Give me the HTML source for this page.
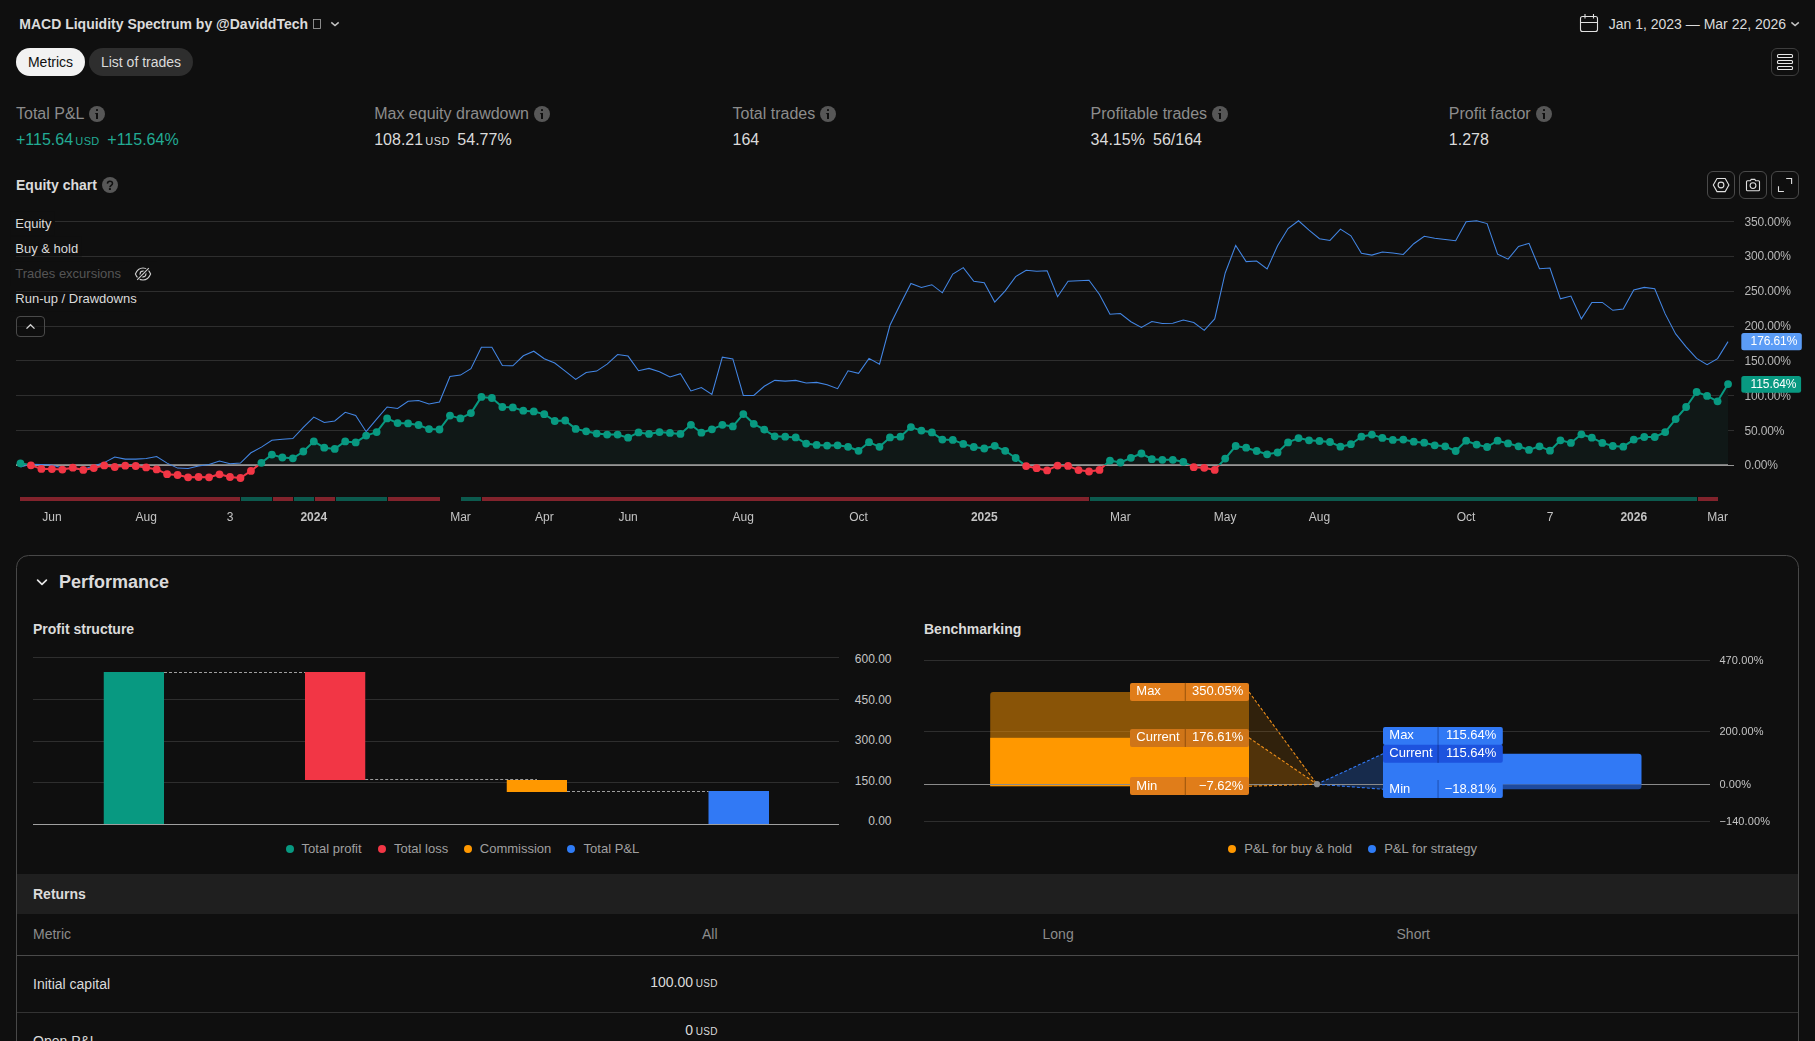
<!DOCTYPE html>
<html lang="en"><head><meta charset="utf-8"><title>Strategy report</title>
<style>
html,body{margin:0;padding:0;background:#0f0f0f;width:1815px;height:1041px;overflow:hidden;}
body{position:relative;font-family:"Liberation Sans",sans-serif;color:#dbdbdb;}
svg{position:absolute;left:0;top:0;font-family:"Liberation Sans",sans-serif;}
.gl{will-change:transform;}
.t{position:absolute;white-space:nowrap;}
.pill{position:absolute;height:28px;border-radius:14px;font-size:14px;line-height:28px;text-align:center;}
.u{font-size:11px;margin-left:2.2px;letter-spacing:0.4px;}
.u2{font-size:10px;margin-left:2.6px;letter-spacing:0.35px;margin-right:-0.35px;}
.dot{position:absolute;width:8px;height:8px;border-radius:50%;}
</style></head><body>
<svg width="1815" height="1041" viewBox="0 0 1815 1041">
<rect x="16" y="221.0" width="1718" height="1" fill="#2e2e2e"/>
<rect x="16" y="256.0" width="1718" height="1" fill="#2e2e2e"/>
<rect x="16" y="291.0" width="1718" height="1" fill="#2e2e2e"/>
<rect x="16" y="326.0" width="1718" height="1" fill="#2e2e2e"/>
<rect x="16" y="360.0" width="1718" height="1" fill="#2e2e2e"/>
<rect x="16" y="395.0" width="1718" height="1" fill="#2e2e2e"/>
<rect x="16" y="430.0" width="1718" height="1" fill="#2e2e2e"/>
<defs><clipPath id="ca"><rect x="0" y="200" width="1815" height="265.3"/></clipPath><clipPath id="cb"><rect x="0" y="465.3" width="1815" height="60"/></clipPath></defs>
<polygon points="20.46,465.3 20.46,463.3 30.94,465.3 41.41,468.9 51.89,469.1 62.36,469.6 72.84,467.7 83.32,469.9 93.79,468.1 104.27,465.4 114.74,467.0 125.22,465.7 135.70,466.0 146.17,467.4 156.65,469.4 167.12,474.2 177.60,475.0 188.08,477.3 198.55,477.0 209.03,477.3 219.50,474.3 229.98,477.0 240.46,478.0 250.93,470.9 261.41,462.8 271.88,454.6 282.36,457.5 292.84,458.3 303.31,451.5 313.79,441.4 324.26,447.7 334.74,448.9 345.22,441.4 355.69,442.4 366.17,435.6 376.64,432.1 387.12,418.4 397.60,423.1 408.07,423.4 418.55,425.0 429.02,429.1 439.50,429.5 449.98,415.6 460.45,418.4 470.93,413.1 481.40,396.9 491.88,398.0 502.36,407.0 512.83,407.4 523.31,410.7 533.78,411.4 544.26,414.2 554.74,421.0 565.21,420.5 575.69,428.9 586.16,431.3 596.64,433.6 607.12,434.6 617.59,434.6 628.07,437.7 638.54,432.4 649.02,433.9 659.50,432.1 669.97,432.9 680.45,433.9 690.92,424.8 701.40,432.7 711.88,429.3 722.35,424.8 732.83,426.4 743.30,414.1 753.78,423.8 764.26,429.6 774.73,436.3 785.21,436.7 795.68,437.4 806.16,443.6 816.64,444.9 827.11,445.6 837.59,445.3 848.06,446.8 858.54,450.8 869.02,442.2 879.49,446.8 889.97,437.4 900.44,436.7 910.92,427.1 921.40,430.6 931.87,432.4 942.35,439.6 952.82,439.9 963.30,443.9 973.78,447.0 984.25,448.5 994.73,445.8 1005.20,450.8 1015.68,458.0 1026.16,466.1 1036.63,468.2 1047.11,470.4 1057.58,465.6 1068.06,465.9 1078.54,470.1 1089.01,471.5 1099.49,469.9 1109.96,460.6 1120.44,462.5 1130.92,457.8 1141.39,453.5 1151.87,459.2 1162.34,459.8 1172.82,459.8 1183.30,461.8 1193.77,467.2 1204.25,467.8 1214.72,469.9 1225.20,458.6 1235.68,446.0 1246.15,447.7 1256.63,451.0 1267.10,454.3 1277.58,452.5 1288.06,442.4 1298.53,438.1 1309.01,440.3 1319.48,441.0 1329.96,442.0 1340.44,446.7 1350.91,444.2 1361.39,436.7 1371.86,434.6 1382.34,437.9 1392.82,439.9 1403.29,439.6 1413.77,441.7 1424.24,442.7 1434.72,445.3 1445.20,446.3 1455.67,451.0 1466.15,440.7 1476.62,444.6 1487.10,447.0 1497.58,440.7 1508.05,443.4 1518.53,446.3 1529.00,449.9 1539.48,446.3 1549.96,450.7 1560.43,440.3 1570.91,442.9 1581.38,434.3 1591.86,437.7 1602.34,442.9 1612.81,446.0 1623.29,446.7 1633.76,439.6 1644.24,437.0 1654.72,437.0 1665.19,432.1 1675.67,419.1 1686.14,407.0 1696.62,392.0 1707.10,395.9 1717.57,401.3 1728.05,384.1 1728.05,465.3" fill="#101817" clip-path="url(#ca)"/>
<polygon points="20.46,465.3 20.46,463.3 30.94,465.3 41.41,468.9 51.89,469.1 62.36,469.6 72.84,467.7 83.32,469.9 93.79,468.1 104.27,465.4 114.74,467.0 125.22,465.7 135.70,466.0 146.17,467.4 156.65,469.4 167.12,474.2 177.60,475.0 188.08,477.3 198.55,477.0 209.03,477.3 219.50,474.3 229.98,477.0 240.46,478.0 250.93,470.9 261.41,462.8 271.88,454.6 282.36,457.5 292.84,458.3 303.31,451.5 313.79,441.4 324.26,447.7 334.74,448.9 345.22,441.4 355.69,442.4 366.17,435.6 376.64,432.1 387.12,418.4 397.60,423.1 408.07,423.4 418.55,425.0 429.02,429.1 439.50,429.5 449.98,415.6 460.45,418.4 470.93,413.1 481.40,396.9 491.88,398.0 502.36,407.0 512.83,407.4 523.31,410.7 533.78,411.4 544.26,414.2 554.74,421.0 565.21,420.5 575.69,428.9 586.16,431.3 596.64,433.6 607.12,434.6 617.59,434.6 628.07,437.7 638.54,432.4 649.02,433.9 659.50,432.1 669.97,432.9 680.45,433.9 690.92,424.8 701.40,432.7 711.88,429.3 722.35,424.8 732.83,426.4 743.30,414.1 753.78,423.8 764.26,429.6 774.73,436.3 785.21,436.7 795.68,437.4 806.16,443.6 816.64,444.9 827.11,445.6 837.59,445.3 848.06,446.8 858.54,450.8 869.02,442.2 879.49,446.8 889.97,437.4 900.44,436.7 910.92,427.1 921.40,430.6 931.87,432.4 942.35,439.6 952.82,439.9 963.30,443.9 973.78,447.0 984.25,448.5 994.73,445.8 1005.20,450.8 1015.68,458.0 1026.16,466.1 1036.63,468.2 1047.11,470.4 1057.58,465.6 1068.06,465.9 1078.54,470.1 1089.01,471.5 1099.49,469.9 1109.96,460.6 1120.44,462.5 1130.92,457.8 1141.39,453.5 1151.87,459.2 1162.34,459.8 1172.82,459.8 1183.30,461.8 1193.77,467.2 1204.25,467.8 1214.72,469.9 1225.20,458.6 1235.68,446.0 1246.15,447.7 1256.63,451.0 1267.10,454.3 1277.58,452.5 1288.06,442.4 1298.53,438.1 1309.01,440.3 1319.48,441.0 1329.96,442.0 1340.44,446.7 1350.91,444.2 1361.39,436.7 1371.86,434.6 1382.34,437.9 1392.82,439.9 1403.29,439.6 1413.77,441.7 1424.24,442.7 1434.72,445.3 1445.20,446.3 1455.67,451.0 1466.15,440.7 1476.62,444.6 1487.10,447.0 1497.58,440.7 1508.05,443.4 1518.53,446.3 1529.00,449.9 1539.48,446.3 1549.96,450.7 1560.43,440.3 1570.91,442.9 1581.38,434.3 1591.86,437.7 1602.34,442.9 1612.81,446.0 1623.29,446.7 1633.76,439.6 1644.24,437.0 1654.72,437.0 1665.19,432.1 1675.67,419.1 1686.14,407.0 1696.62,392.0 1707.10,395.9 1717.57,401.3 1728.05,384.1 1728.05,465.3" fill="#1c1114" clip-path="url(#cb)"/>
<rect x="16" y="465" width="1718" height="1" fill="#969696"/><rect x="16" y="464" width="1712" height="1" fill="#7c7c7c"/>
<polyline points="20.46,467.0 30.94,464.3 41.41,464.5 51.89,465.0 62.36,468.0 72.84,469.0 83.32,469.3 93.79,466.0 104.27,462.6 114.74,457.1 125.22,459.1 135.70,459.1 146.17,458.4 156.65,456.5 167.12,463.1 177.60,468.1 188.08,468.4 198.55,466.0 209.03,464.6 219.50,461.1 229.98,463.8 240.46,463.1 250.93,452.8 261.41,447.1 271.88,440.3 282.36,439.3 292.84,438.6 303.31,427.4 313.79,417.1 324.26,422.4 334.74,420.9 345.22,412.3 355.69,415.5 366.17,431.7 376.64,419.1 387.12,407.0 397.60,408.5 408.07,401.2 418.55,400.5 429.02,404.0 439.50,402.0 449.98,376.5 460.45,375.1 470.93,368.7 481.40,347.2 491.88,347.2 502.36,365.5 512.83,365.8 523.31,355.8 533.78,351.2 544.26,358.7 554.74,363.0 565.21,371.1 575.69,379.4 586.16,372.6 596.64,371.1 607.12,364.1 617.59,354.6 628.07,356.1 638.54,370.7 649.02,368.4 659.50,371.8 669.97,377.0 680.45,373.7 690.92,390.9 701.40,387.6 711.88,394.5 722.35,357.2 732.83,358.9 743.30,395.5 753.78,395.5 764.26,386.3 774.73,380.4 785.21,381.1 795.68,380.4 806.16,383.0 816.64,382.4 827.11,384.7 837.59,388.7 848.06,370.8 858.54,373.3 869.02,358.4 879.49,364.1 889.97,325.3 900.44,303.9 910.92,283.5 921.40,287.4 931.87,284.7 942.35,292.8 952.82,274.1 963.30,267.6 973.78,281.2 984.25,282.8 994.73,302.1 1005.20,290.8 1015.68,276.6 1026.16,270.2 1036.63,271.2 1047.11,270.7 1057.58,296.7 1068.06,281.2 1078.54,280.8 1089.01,280.3 1099.49,294.5 1109.96,314.3 1120.44,313.6 1130.92,321.7 1141.39,327.5 1151.87,321.5 1162.34,323.5 1172.82,323.2 1183.30,320.0 1193.77,322.5 1204.25,330.3 1214.72,318.9 1225.20,273.0 1235.68,245.5 1246.15,261.6 1256.63,261.1 1267.10,269.0 1277.58,245.8 1288.06,228.6 1298.53,220.8 1309.01,230.1 1319.48,238.7 1329.96,240.4 1340.44,229.1 1350.91,235.8 1361.39,253.3 1371.86,255.1 1382.34,252.0 1392.82,253.0 1403.29,254.4 1413.77,243.7 1424.24,236.2 1434.72,238.2 1445.20,239.5 1455.67,240.8 1466.15,221.8 1476.62,220.8 1487.10,223.6 1497.58,254.1 1508.05,259.2 1518.53,246.5 1529.00,243.3 1539.48,268.8 1549.96,268.0 1560.43,298.8 1570.91,296.0 1581.38,318.9 1591.86,302.4 1602.34,302.4 1612.81,310.3 1623.29,308.9 1633.76,290.0 1644.24,287.4 1654.72,288.8 1665.19,313.9 1675.67,333.9 1686.14,346.8 1696.62,358.4 1707.10,364.6 1717.57,358.6 1728.05,341.6" fill="none" stroke="#4386e4" stroke-width="1.05"/>
<polyline points="20.46,463.3 30.94,465.3 41.41,468.9 51.89,469.1 62.36,469.6 72.84,467.7 83.32,469.9 93.79,468.1 104.27,465.4 114.74,467.0 125.22,465.7 135.70,466.0 146.17,467.4 156.65,469.4 167.12,474.2 177.60,475.0 188.08,477.3 198.55,477.0 209.03,477.3 219.50,474.3 229.98,477.0 240.46,478.0 250.93,470.9 261.41,462.8 271.88,454.6 282.36,457.5 292.84,458.3 303.31,451.5 313.79,441.4 324.26,447.7 334.74,448.9 345.22,441.4 355.69,442.4 366.17,435.6 376.64,432.1 387.12,418.4 397.60,423.1 408.07,423.4 418.55,425.0 429.02,429.1 439.50,429.5 449.98,415.6 460.45,418.4 470.93,413.1 481.40,396.9 491.88,398.0 502.36,407.0 512.83,407.4 523.31,410.7 533.78,411.4 544.26,414.2 554.74,421.0 565.21,420.5 575.69,428.9 586.16,431.3 596.64,433.6 607.12,434.6 617.59,434.6 628.07,437.7 638.54,432.4 649.02,433.9 659.50,432.1 669.97,432.9 680.45,433.9 690.92,424.8 701.40,432.7 711.88,429.3 722.35,424.8 732.83,426.4 743.30,414.1 753.78,423.8 764.26,429.6 774.73,436.3 785.21,436.7 795.68,437.4 806.16,443.6 816.64,444.9 827.11,445.6 837.59,445.3 848.06,446.8 858.54,450.8 869.02,442.2 879.49,446.8 889.97,437.4 900.44,436.7 910.92,427.1 921.40,430.6 931.87,432.4 942.35,439.6 952.82,439.9 963.30,443.9 973.78,447.0 984.25,448.5 994.73,445.8 1005.20,450.8 1015.68,458.0 1026.16,466.1 1036.63,468.2 1047.11,470.4 1057.58,465.6 1068.06,465.9 1078.54,470.1 1089.01,471.5 1099.49,469.9 1109.96,460.6 1120.44,462.5 1130.92,457.8 1141.39,453.5 1151.87,459.2 1162.34,459.8 1172.82,459.8 1183.30,461.8 1193.77,467.2 1204.25,467.8 1214.72,469.9 1225.20,458.6 1235.68,446.0 1246.15,447.7 1256.63,451.0 1267.10,454.3 1277.58,452.5 1288.06,442.4 1298.53,438.1 1309.01,440.3 1319.48,441.0 1329.96,442.0 1340.44,446.7 1350.91,444.2 1361.39,436.7 1371.86,434.6 1382.34,437.9 1392.82,439.9 1403.29,439.6 1413.77,441.7 1424.24,442.7 1434.72,445.3 1445.20,446.3 1455.67,451.0 1466.15,440.7 1476.62,444.6 1487.10,447.0 1497.58,440.7 1508.05,443.4 1518.53,446.3 1529.00,449.9 1539.48,446.3 1549.96,450.7 1560.43,440.3 1570.91,442.9 1581.38,434.3 1591.86,437.7 1602.34,442.9 1612.81,446.0 1623.29,446.7 1633.76,439.6 1644.24,437.0 1654.72,437.0 1665.19,432.1 1675.67,419.1 1686.14,407.0 1696.62,392.0 1707.10,395.9 1717.57,401.3 1728.05,384.1" fill="none" stroke="#089981" stroke-width="2" stroke-linejoin="round" clip-path="url(#ca)"/>
<polyline points="20.46,463.3 30.94,465.3 41.41,468.9 51.89,469.1 62.36,469.6 72.84,467.7 83.32,469.9 93.79,468.1 104.27,465.4 114.74,467.0 125.22,465.7 135.70,466.0 146.17,467.4 156.65,469.4 167.12,474.2 177.60,475.0 188.08,477.3 198.55,477.0 209.03,477.3 219.50,474.3 229.98,477.0 240.46,478.0 250.93,470.9 261.41,462.8 271.88,454.6 282.36,457.5 292.84,458.3 303.31,451.5 313.79,441.4 324.26,447.7 334.74,448.9 345.22,441.4 355.69,442.4 366.17,435.6 376.64,432.1 387.12,418.4 397.60,423.1 408.07,423.4 418.55,425.0 429.02,429.1 439.50,429.5 449.98,415.6 460.45,418.4 470.93,413.1 481.40,396.9 491.88,398.0 502.36,407.0 512.83,407.4 523.31,410.7 533.78,411.4 544.26,414.2 554.74,421.0 565.21,420.5 575.69,428.9 586.16,431.3 596.64,433.6 607.12,434.6 617.59,434.6 628.07,437.7 638.54,432.4 649.02,433.9 659.50,432.1 669.97,432.9 680.45,433.9 690.92,424.8 701.40,432.7 711.88,429.3 722.35,424.8 732.83,426.4 743.30,414.1 753.78,423.8 764.26,429.6 774.73,436.3 785.21,436.7 795.68,437.4 806.16,443.6 816.64,444.9 827.11,445.6 837.59,445.3 848.06,446.8 858.54,450.8 869.02,442.2 879.49,446.8 889.97,437.4 900.44,436.7 910.92,427.1 921.40,430.6 931.87,432.4 942.35,439.6 952.82,439.9 963.30,443.9 973.78,447.0 984.25,448.5 994.73,445.8 1005.20,450.8 1015.68,458.0 1026.16,466.1 1036.63,468.2 1047.11,470.4 1057.58,465.6 1068.06,465.9 1078.54,470.1 1089.01,471.5 1099.49,469.9 1109.96,460.6 1120.44,462.5 1130.92,457.8 1141.39,453.5 1151.87,459.2 1162.34,459.8 1172.82,459.8 1183.30,461.8 1193.77,467.2 1204.25,467.8 1214.72,469.9 1225.20,458.6 1235.68,446.0 1246.15,447.7 1256.63,451.0 1267.10,454.3 1277.58,452.5 1288.06,442.4 1298.53,438.1 1309.01,440.3 1319.48,441.0 1329.96,442.0 1340.44,446.7 1350.91,444.2 1361.39,436.7 1371.86,434.6 1382.34,437.9 1392.82,439.9 1403.29,439.6 1413.77,441.7 1424.24,442.7 1434.72,445.3 1445.20,446.3 1455.67,451.0 1466.15,440.7 1476.62,444.6 1487.10,447.0 1497.58,440.7 1508.05,443.4 1518.53,446.3 1529.00,449.9 1539.48,446.3 1549.96,450.7 1560.43,440.3 1570.91,442.9 1581.38,434.3 1591.86,437.7 1602.34,442.9 1612.81,446.0 1623.29,446.7 1633.76,439.6 1644.24,437.0 1654.72,437.0 1665.19,432.1 1675.67,419.1 1686.14,407.0 1696.62,392.0 1707.10,395.9 1717.57,401.3 1728.05,384.1" fill="none" stroke="#f23645" stroke-width="2" stroke-linejoin="round" clip-path="url(#cb)"/>
<circle cx="20.46" cy="463.3" r="3.9" fill="#089981"/>
<circle cx="30.94" cy="465.3" r="3.9" fill="#f23645"/>
<circle cx="41.41" cy="468.9" r="3.9" fill="#f23645"/>
<circle cx="51.89" cy="469.1" r="3.9" fill="#f23645"/>
<circle cx="62.36" cy="469.6" r="3.9" fill="#f23645"/>
<circle cx="72.84" cy="467.7" r="3.9" fill="#f23645"/>
<circle cx="83.32" cy="469.9" r="3.9" fill="#f23645"/>
<circle cx="93.79" cy="468.1" r="3.9" fill="#f23645"/>
<circle cx="104.27" cy="465.4" r="3.9" fill="#f23645"/>
<circle cx="114.74" cy="467.0" r="3.9" fill="#f23645"/>
<circle cx="125.22" cy="465.7" r="3.9" fill="#f23645"/>
<circle cx="135.70" cy="466.0" r="3.9" fill="#f23645"/>
<circle cx="146.17" cy="467.4" r="3.9" fill="#f23645"/>
<circle cx="156.65" cy="469.4" r="3.9" fill="#f23645"/>
<circle cx="167.12" cy="474.2" r="3.9" fill="#f23645"/>
<circle cx="177.60" cy="475.0" r="3.9" fill="#f23645"/>
<circle cx="188.08" cy="477.3" r="3.9" fill="#f23645"/>
<circle cx="198.55" cy="477.0" r="3.9" fill="#f23645"/>
<circle cx="209.03" cy="477.3" r="3.9" fill="#f23645"/>
<circle cx="219.50" cy="474.3" r="3.9" fill="#f23645"/>
<circle cx="229.98" cy="477.0" r="3.9" fill="#f23645"/>
<circle cx="240.46" cy="478.0" r="3.9" fill="#f23645"/>
<circle cx="250.93" cy="470.9" r="3.9" fill="#f23645"/>
<circle cx="261.41" cy="462.8" r="3.9" fill="#089981"/>
<circle cx="271.88" cy="454.6" r="3.9" fill="#089981"/>
<circle cx="282.36" cy="457.5" r="3.9" fill="#089981"/>
<circle cx="292.84" cy="458.3" r="3.9" fill="#089981"/>
<circle cx="303.31" cy="451.5" r="3.9" fill="#089981"/>
<circle cx="313.79" cy="441.4" r="3.9" fill="#089981"/>
<circle cx="324.26" cy="447.7" r="3.9" fill="#089981"/>
<circle cx="334.74" cy="448.9" r="3.9" fill="#089981"/>
<circle cx="345.22" cy="441.4" r="3.9" fill="#089981"/>
<circle cx="355.69" cy="442.4" r="3.9" fill="#089981"/>
<circle cx="366.17" cy="435.6" r="3.9" fill="#089981"/>
<circle cx="376.64" cy="432.1" r="3.9" fill="#089981"/>
<circle cx="387.12" cy="418.4" r="3.9" fill="#089981"/>
<circle cx="397.60" cy="423.1" r="3.9" fill="#089981"/>
<circle cx="408.07" cy="423.4" r="3.9" fill="#089981"/>
<circle cx="418.55" cy="425.0" r="3.9" fill="#089981"/>
<circle cx="429.02" cy="429.1" r="3.9" fill="#089981"/>
<circle cx="439.50" cy="429.5" r="3.9" fill="#089981"/>
<circle cx="449.98" cy="415.6" r="3.9" fill="#089981"/>
<circle cx="460.45" cy="418.4" r="3.9" fill="#089981"/>
<circle cx="470.93" cy="413.1" r="3.9" fill="#089981"/>
<circle cx="481.40" cy="396.9" r="3.9" fill="#089981"/>
<circle cx="491.88" cy="398.0" r="3.9" fill="#089981"/>
<circle cx="502.36" cy="407.0" r="3.9" fill="#089981"/>
<circle cx="512.83" cy="407.4" r="3.9" fill="#089981"/>
<circle cx="523.31" cy="410.7" r="3.9" fill="#089981"/>
<circle cx="533.78" cy="411.4" r="3.9" fill="#089981"/>
<circle cx="544.26" cy="414.2" r="3.9" fill="#089981"/>
<circle cx="554.74" cy="421.0" r="3.9" fill="#089981"/>
<circle cx="565.21" cy="420.5" r="3.9" fill="#089981"/>
<circle cx="575.69" cy="428.9" r="3.9" fill="#089981"/>
<circle cx="586.16" cy="431.3" r="3.9" fill="#089981"/>
<circle cx="596.64" cy="433.6" r="3.9" fill="#089981"/>
<circle cx="607.12" cy="434.6" r="3.9" fill="#089981"/>
<circle cx="617.59" cy="434.6" r="3.9" fill="#089981"/>
<circle cx="628.07" cy="437.7" r="3.9" fill="#089981"/>
<circle cx="638.54" cy="432.4" r="3.9" fill="#089981"/>
<circle cx="649.02" cy="433.9" r="3.9" fill="#089981"/>
<circle cx="659.50" cy="432.1" r="3.9" fill="#089981"/>
<circle cx="669.97" cy="432.9" r="3.9" fill="#089981"/>
<circle cx="680.45" cy="433.9" r="3.9" fill="#089981"/>
<circle cx="690.92" cy="424.8" r="3.9" fill="#089981"/>
<circle cx="701.40" cy="432.7" r="3.9" fill="#089981"/>
<circle cx="711.88" cy="429.3" r="3.9" fill="#089981"/>
<circle cx="722.35" cy="424.8" r="3.9" fill="#089981"/>
<circle cx="732.83" cy="426.4" r="3.9" fill="#089981"/>
<circle cx="743.30" cy="414.1" r="3.9" fill="#089981"/>
<circle cx="753.78" cy="423.8" r="3.9" fill="#089981"/>
<circle cx="764.26" cy="429.6" r="3.9" fill="#089981"/>
<circle cx="774.73" cy="436.3" r="3.9" fill="#089981"/>
<circle cx="785.21" cy="436.7" r="3.9" fill="#089981"/>
<circle cx="795.68" cy="437.4" r="3.9" fill="#089981"/>
<circle cx="806.16" cy="443.6" r="3.9" fill="#089981"/>
<circle cx="816.64" cy="444.9" r="3.9" fill="#089981"/>
<circle cx="827.11" cy="445.6" r="3.9" fill="#089981"/>
<circle cx="837.59" cy="445.3" r="3.9" fill="#089981"/>
<circle cx="848.06" cy="446.8" r="3.9" fill="#089981"/>
<circle cx="858.54" cy="450.8" r="3.9" fill="#089981"/>
<circle cx="869.02" cy="442.2" r="3.9" fill="#089981"/>
<circle cx="879.49" cy="446.8" r="3.9" fill="#089981"/>
<circle cx="889.97" cy="437.4" r="3.9" fill="#089981"/>
<circle cx="900.44" cy="436.7" r="3.9" fill="#089981"/>
<circle cx="910.92" cy="427.1" r="3.9" fill="#089981"/>
<circle cx="921.40" cy="430.6" r="3.9" fill="#089981"/>
<circle cx="931.87" cy="432.4" r="3.9" fill="#089981"/>
<circle cx="942.35" cy="439.6" r="3.9" fill="#089981"/>
<circle cx="952.82" cy="439.9" r="3.9" fill="#089981"/>
<circle cx="963.30" cy="443.9" r="3.9" fill="#089981"/>
<circle cx="973.78" cy="447.0" r="3.9" fill="#089981"/>
<circle cx="984.25" cy="448.5" r="3.9" fill="#089981"/>
<circle cx="994.73" cy="445.8" r="3.9" fill="#089981"/>
<circle cx="1005.20" cy="450.8" r="3.9" fill="#089981"/>
<circle cx="1015.68" cy="458.0" r="3.9" fill="#089981"/>
<circle cx="1026.16" cy="466.1" r="3.9" fill="#f23645"/>
<circle cx="1036.63" cy="468.2" r="3.9" fill="#f23645"/>
<circle cx="1047.11" cy="470.4" r="3.9" fill="#f23645"/>
<circle cx="1057.58" cy="465.6" r="3.9" fill="#f23645"/>
<circle cx="1068.06" cy="465.9" r="3.9" fill="#f23645"/>
<circle cx="1078.54" cy="470.1" r="3.9" fill="#f23645"/>
<circle cx="1089.01" cy="471.5" r="3.9" fill="#f23645"/>
<circle cx="1099.49" cy="469.9" r="3.9" fill="#f23645"/>
<circle cx="1109.96" cy="460.6" r="3.9" fill="#089981"/>
<circle cx="1120.44" cy="462.5" r="3.9" fill="#089981"/>
<circle cx="1130.92" cy="457.8" r="3.9" fill="#089981"/>
<circle cx="1141.39" cy="453.5" r="3.9" fill="#089981"/>
<circle cx="1151.87" cy="459.2" r="3.9" fill="#089981"/>
<circle cx="1162.34" cy="459.8" r="3.9" fill="#089981"/>
<circle cx="1172.82" cy="459.8" r="3.9" fill="#089981"/>
<circle cx="1183.30" cy="461.8" r="3.9" fill="#089981"/>
<circle cx="1193.77" cy="467.2" r="3.9" fill="#f23645"/>
<circle cx="1204.25" cy="467.8" r="3.9" fill="#f23645"/>
<circle cx="1214.72" cy="469.9" r="3.9" fill="#f23645"/>
<circle cx="1225.20" cy="458.6" r="3.9" fill="#089981"/>
<circle cx="1235.68" cy="446.0" r="3.9" fill="#089981"/>
<circle cx="1246.15" cy="447.7" r="3.9" fill="#089981"/>
<circle cx="1256.63" cy="451.0" r="3.9" fill="#089981"/>
<circle cx="1267.10" cy="454.3" r="3.9" fill="#089981"/>
<circle cx="1277.58" cy="452.5" r="3.9" fill="#089981"/>
<circle cx="1288.06" cy="442.4" r="3.9" fill="#089981"/>
<circle cx="1298.53" cy="438.1" r="3.9" fill="#089981"/>
<circle cx="1309.01" cy="440.3" r="3.9" fill="#089981"/>
<circle cx="1319.48" cy="441.0" r="3.9" fill="#089981"/>
<circle cx="1329.96" cy="442.0" r="3.9" fill="#089981"/>
<circle cx="1340.44" cy="446.7" r="3.9" fill="#089981"/>
<circle cx="1350.91" cy="444.2" r="3.9" fill="#089981"/>
<circle cx="1361.39" cy="436.7" r="3.9" fill="#089981"/>
<circle cx="1371.86" cy="434.6" r="3.9" fill="#089981"/>
<circle cx="1382.34" cy="437.9" r="3.9" fill="#089981"/>
<circle cx="1392.82" cy="439.9" r="3.9" fill="#089981"/>
<circle cx="1403.29" cy="439.6" r="3.9" fill="#089981"/>
<circle cx="1413.77" cy="441.7" r="3.9" fill="#089981"/>
<circle cx="1424.24" cy="442.7" r="3.9" fill="#089981"/>
<circle cx="1434.72" cy="445.3" r="3.9" fill="#089981"/>
<circle cx="1445.20" cy="446.3" r="3.9" fill="#089981"/>
<circle cx="1455.67" cy="451.0" r="3.9" fill="#089981"/>
<circle cx="1466.15" cy="440.7" r="3.9" fill="#089981"/>
<circle cx="1476.62" cy="444.6" r="3.9" fill="#089981"/>
<circle cx="1487.10" cy="447.0" r="3.9" fill="#089981"/>
<circle cx="1497.58" cy="440.7" r="3.9" fill="#089981"/>
<circle cx="1508.05" cy="443.4" r="3.9" fill="#089981"/>
<circle cx="1518.53" cy="446.3" r="3.9" fill="#089981"/>
<circle cx="1529.00" cy="449.9" r="3.9" fill="#089981"/>
<circle cx="1539.48" cy="446.3" r="3.9" fill="#089981"/>
<circle cx="1549.96" cy="450.7" r="3.9" fill="#089981"/>
<circle cx="1560.43" cy="440.3" r="3.9" fill="#089981"/>
<circle cx="1570.91" cy="442.9" r="3.9" fill="#089981"/>
<circle cx="1581.38" cy="434.3" r="3.9" fill="#089981"/>
<circle cx="1591.86" cy="437.7" r="3.9" fill="#089981"/>
<circle cx="1602.34" cy="442.9" r="3.9" fill="#089981"/>
<circle cx="1612.81" cy="446.0" r="3.9" fill="#089981"/>
<circle cx="1623.29" cy="446.7" r="3.9" fill="#089981"/>
<circle cx="1633.76" cy="439.6" r="3.9" fill="#089981"/>
<circle cx="1644.24" cy="437.0" r="3.9" fill="#089981"/>
<circle cx="1654.72" cy="437.0" r="3.9" fill="#089981"/>
<circle cx="1665.19" cy="432.1" r="3.9" fill="#089981"/>
<circle cx="1675.67" cy="419.1" r="3.9" fill="#089981"/>
<circle cx="1686.14" cy="407.0" r="3.9" fill="#089981"/>
<circle cx="1696.62" cy="392.0" r="3.9" fill="#089981"/>
<circle cx="1707.10" cy="395.9" r="3.9" fill="#089981"/>
<circle cx="1717.57" cy="401.3" r="3.9" fill="#089981"/>
<circle cx="1728.05" cy="384.1" r="3.9" fill="#089981"/>
<rect x="20.00" y="497" width="220.00" height="4" fill="#82232c"/>
<rect x="241.00" y="497" width="31.00" height="4" fill="#0c5a4e"/>
<rect x="273.00" y="497" width="20.00" height="4" fill="#82232c"/>
<rect x="294.00" y="497" width="20.00" height="4" fill="#0c5a4e"/>
<rect x="315.00" y="497" width="20.00" height="4" fill="#82232c"/>
<rect x="336.00" y="497" width="51.00" height="4" fill="#0c5a4e"/>
<rect x="388.00" y="497" width="52.00" height="4" fill="#82232c"/>
<rect x="461.00" y="497" width="20.00" height="4" fill="#0c5a4e"/>
<rect x="482.00" y="497" width="607.00" height="4" fill="#82232c"/>
<rect x="1090.00" y="497" width="607.00" height="4" fill="#0c5a4e"/>
<rect x="1698.00" y="497" width="20.00" height="4" fill="#82232c"/>

























<rect x="10.7" y="211.4" width="44.2" height="24.4" fill="#0f0f0f"/>
<rect x="10.7" y="236.4" width="71" height="19.2" fill="#0f0f0f"/>
<rect x="10.7" y="261.4" width="145.5" height="24.6" fill="#0f0f0f"/>
<rect x="10.7" y="292" width="128.5" height="19.5" fill="#0f0f0f"/>
<rect x="10.7" y="256" width="71" height="1" fill="#0f0f0f" opacity="0.45"/>
<rect x="10.7" y="291" width="128.5" height="1" fill="#0f0f0f" opacity="0.45"/>
<rect x="16.5" y="316.5" width="28" height="20" rx="3.5" fill="#0f0f0f" fill-opacity="0.55" stroke="#4a4a4a"/>
<path d="M26.5 328.6 L30.5 324.7 L34.5 328.6" fill="none" stroke="#d6d6d6" stroke-width="1.3"/>
<g fill="none" stroke="#cfcfcf" stroke-width="1.1"><path d="M135.4 274 C138.6 266 147.4 266 150.6 274 C147.4 282 138.6 282 135.4 274Z"/><circle cx="143" cy="274" r="2.9"/><path d="M137.2 279.8 L148.8 268.1" stroke="#0f0f0f" stroke-width="3"/><path d="M137.2 279.8 L148.8 268.1"/></g>
<rect x="313.5" y="19.5" width="7" height="9" fill="none" stroke="#a8a8a8" stroke-width="0.8"/>
<path d="M331.3 22.4 L335 25.6 L338.7 22.4" fill="none" stroke="#c4c4c4" stroke-width="1.5"/>
<g fill="none" stroke="#e0e0e0" stroke-width="1.1"><rect x="1580.5" y="16.5" width="17" height="15" rx="2"/><path d="M1580.5 22.5H1597.5M1585 14v4.5M1593.5 14v4.5"/></g>
<path d="M1791.4 22.4 L1795.1 25.6 L1798.8 22.4" fill="none" stroke="#c4c4c4" stroke-width="1.5"/>
<rect x="1771.5" y="48.5" width="27" height="27" rx="5.5" fill="none" stroke="#3d3d3d"/>
<rect x="1777.5" y="54.5" width="15" height="3" rx="1" fill="none" stroke="#e6e6e6" stroke-width="1.1"/>
<rect x="1777.5" y="60.5" width="15" height="3" rx="1" fill="none" stroke="#e6e6e6" stroke-width="1.1"/>
<rect x="1777.5" y="66.5" width="15" height="3" rx="1" fill="none" stroke="#e6e6e6" stroke-width="1.1"/>
<rect x="1707.5" y="171.5" width="27" height="27" rx="5.5" fill="none" stroke="#4a4a4a"/>
<rect x="1739.5" y="171.5" width="27" height="27" rx="5.5" fill="none" stroke="#4a4a4a"/>
<rect x="1771.5" y="171.5" width="27" height="27" rx="5.5" fill="none" stroke="#4a4a4a"/>
<g fill="none" stroke="#e0e0e0" stroke-width="1.1"><path d="M1713.3 185 L1717 178.5 H1725.2 L1728.9 185 L1725.2 191.6 H1717Z"/><circle cx="1721" cy="185" r="2.9"/></g>
<g fill="none" stroke="#e0e0e0" stroke-width="1.1"><path d="M1747.5 180.7 H1750.4 L1751.2 179.4 H1754.8 L1755.6 180.7 H1758.5 a1 1 0 0 1 1 1 V189.8 a1 1 0 0 1 -1 1 H1747.5 a1 1 0 0 1 -1 -1 V181.7 a1 1 0 0 1 1 -1Z"/><circle cx="1753" cy="185.6" r="2.9"/></g>
<path d="M1786.2 178.5 H1791.6 V183.9 M1778.5 186.2 V191.5 H1783.9" fill="none" stroke="#e0e0e0" stroke-width="1.1"/>
<circle cx="97" cy="114" r="8" fill="#575757"/>
<rect x="96" y="113" width="2" height="6" fill="#0f0f0f"/><path d="M94.8 113H96V114.6Z" fill="#0f0f0f"/><rect x="96" y="109" width="2" height="2" rx="0.4" fill="#0f0f0f"/>
<circle cx="542" cy="114" r="8" fill="#575757"/>
<rect x="541" y="113" width="2" height="6" fill="#0f0f0f"/><path d="M539.8 113H541V114.6Z" fill="#0f0f0f"/><rect x="541" y="109" width="2" height="2" rx="0.4" fill="#0f0f0f"/>
<circle cx="828" cy="114" r="8" fill="#575757"/>
<rect x="827" y="113" width="2" height="6" fill="#0f0f0f"/><path d="M825.8 113H827V114.6Z" fill="#0f0f0f"/><rect x="827" y="109" width="2" height="2" rx="0.4" fill="#0f0f0f"/>
<circle cx="1220" cy="114" r="8" fill="#575757"/>
<rect x="1219" y="113" width="2" height="6" fill="#0f0f0f"/><path d="M1217.8 113H1219V114.6Z" fill="#0f0f0f"/><rect x="1219" y="109" width="2" height="2" rx="0.4" fill="#0f0f0f"/>
<circle cx="1544" cy="114" r="8" fill="#575757"/>
<rect x="1543" y="113" width="2" height="6" fill="#0f0f0f"/><path d="M1541.8 113H1543V114.6Z" fill="#0f0f0f"/><rect x="1543" y="109" width="2" height="2" rx="0.4" fill="#0f0f0f"/>
<circle cx="110" cy="185" r="8" fill="#575757"/>
<path d="M107.4 183.6 C107.5 182 108.5 181.3 109.9 181.3 C111.5 181.3 112.5 182.2 112.5 183.5 C112.5 185.2 109.9 185.4 109.9 187.3" fill="none" stroke="#0f0f0f" stroke-width="1.5"/><rect x="108.9" y="188.1" width="2" height="1.9" fill="#0f0f0f"/>
<path d="M16.5 1045 V567.5 a12 12 0 0 1 12 -12 H1786.5 a12 12 0 0 1 12 12 V1045" fill="none" stroke="#484848"/>
<path d="M37.6 580.2 L42 584.4 L46.4 580.2" fill="none" stroke="#e6e6e6" stroke-width="1.7" stroke-linecap="round" stroke-linejoin="round"/>
<rect x="33" y="657.0" width="806" height="1" fill="#2e2e2e"/>
<rect x="33" y="699.0" width="806" height="1" fill="#2e2e2e"/>
<rect x="33" y="741.0" width="806" height="1" fill="#2e2e2e"/>
<rect x="33" y="782.0" width="806" height="1" fill="#2e2e2e"/>
<rect x="33" y="824" width="806" height="1" fill="#a0a0a0"/>
<rect x="103.75" y="672" width="60.25" height="152" fill="#089981"/>
<rect x="305" y="672" width="60.25" height="108" fill="#f23645"/>
<rect x="506.75" y="780" width="60.25" height="12" fill="#ff9800"/>
<rect x="708.5" y="791" width="60.5" height="33" fill="#3179f5"/>
<g stroke="#9e9e9e" stroke-width="1" stroke-dasharray="3 2"><path d="M164 672.5H305M365.2 779.5H537M567 791.5H708.5"/></g>
<rect x="924" y="660" width="786" height="1" fill="#2e2e2e"/>
<rect x="924" y="731" width="786" height="1" fill="#2e2e2e"/>
<rect x="924" y="821" width="786" height="1" fill="#2e2e2e"/>




<path d="M990.2 786.2 V695 a3 3 0 0 1 3 -3 H1249 V786.2Z" fill="rgba(255,152,0,0.51)"/>
<rect x="990.2" y="737.8" width="258.8" height="48.4" fill="#ff9800"/>
<polygon points="1249,692 1317,784.2 1249,786.2" fill="rgba(255,152,0,0.14)"/>
<polygon points="1249,737.8 1317,784.2 1249,786.2" fill="rgba(255,152,0,0.16)"/>
<polygon points="1317,784.2 1383,753.8 1383,789.2" fill="rgba(49,121,245,0.27)"/>
<rect x="924" y="784" width="786" height="1" fill="#8a8a8a"/>
<g fill="none" stroke="#f0901a" stroke-width="1.1" stroke-dasharray="3 2"><path d="M1249 692L1317 784.2M1249 737.8L1317 784.2M1249 786.2L1317 784.2"/></g>
<g fill="none" stroke="#3179f5" stroke-width="1.1" stroke-dasharray="3 2"><path d="M1317 784.2L1383 753.8M1317 784.2L1383 789.2"/></g>
<path d="M1383 753.8 H1638.5 a3 3 0 0 1 3 3 V784.4 H1383Z" fill="#3179f5"/>
<path d="M1383 784.4 H1641.5 V786.2 a3 3 0 0 1 -3 3 H1383Z" fill="#1e4a9e"/>
<circle cx="1317" cy="784.2" r="3.1" fill="#8a8a8a"/>
<rect x="1130" y="682.9" width="119" height="18" rx="2" fill="#e07d1a"/><rect x="1184.7" y="682.9" width="1.3" height="18" fill="#a85c0e"/>

<rect x="1130" y="728.9" width="119" height="18" rx="2" fill="#cf7518"/><rect x="1184.7" y="728.9" width="1.3" height="18" fill="#a0580e"/>

<rect x="1130" y="777.1" width="119" height="18" rx="2" fill="#e07d1a"/><rect x="1184.7" y="777.1" width="1.3" height="18" fill="#a85c0e"/>

<rect x="1383" y="726.9" width="119.79999999999995" height="18" rx="2" fill="#3179f5"/><rect x="1437.4" y="726.9" width="1.3" height="18" fill="#2258c0"/>

<rect x="1383" y="744.8" width="119.79999999999995" height="18" rx="2" fill="#1d53de"/><rect x="1437.4" y="744.8" width="1.3" height="18" fill="#163ea8"/>

<rect x="1383" y="780" width="119.79999999999995" height="18" rx="2" fill="#3179f5"/><rect x="1437.4" y="780" width="1.3" height="18" fill="#2258c0"/>

<rect x="17" y="874" width="1781" height="40" fill="#1f1f1f"/>
<rect x="17" y="955" width="1781" height="1" fill="#4a4a4a"/>
<rect x="17" y="1012" width="1781" height="1" fill="#333333"/>
</svg>
<div class="t" style="top:17px;font-size:14px;line-height:14px;color:#dbdbdb;font-weight:700;left:19.30px;">MACD Liquidity Spectrum by @DaviddTech</div>
<div class="pill" style="left:16px;top:48px;width:69px;background:#f2f2f2;color:#0f0f0f">Metrics</div>
<div class="pill" style="left:89px;top:48px;width:104px;background:#2e2e2e;color:#dbdbdb">List of trades</div>
<div class="t" style="top:17px;font-size:14px;line-height:14px;color:#dbdbdb;left:1608.70px;">Jan 1, 2023 — Mar 22, 2026</div>
<div class="t" style="top:106px;font-size:16px;line-height:16px;color:#8c8c8c;left:16.00px;">Total P&amp;L</div>
<div class="t" style="top:106px;font-size:16px;line-height:16px;color:#8c8c8c;left:374.20px;">Max equity drawdown</div>
<div class="t" style="top:106px;font-size:16px;line-height:16px;color:#8c8c8c;left:732.50px;">Total trades</div>
<div class="t" style="top:106px;font-size:16px;line-height:16px;color:#8c8c8c;left:1090.60px;">Profitable trades</div>
<div class="t" style="top:106px;font-size:16px;line-height:16px;color:#8c8c8c;left:1448.80px;">Profit factor</div>
<div class="t" style="top:132px;font-size:16px;line-height:16px;color:#22ab94;left:16.00px;">+115.64<span class="u">USD</span><span style="margin-left:7.6px">+115.64%</span></div>
<div class="t" style="top:132px;font-size:16px;line-height:16px;color:#dbdbdb;left:374.20px;">108.21<span class="u">USD</span><span style="margin-left:7.6px">54.77%</span></div>
<div class="t" style="top:132px;font-size:16px;line-height:16px;color:#dbdbdb;left:732.50px;">164</div>
<div class="t" style="top:132px;font-size:16px;line-height:16px;color:#dbdbdb;left:1090.60px;">34.15%<span style="margin-left:8.2px">56/164</span></div>
<div class="t" style="top:132px;font-size:16px;line-height:16px;color:#dbdbdb;left:1448.80px;">1.278</div>
<div class="t" style="top:178px;font-size:14px;line-height:14px;color:#dbdbdb;font-weight:700;left:16.00px;">Equity chart</div>
<div class="t" style="top:217px;font-size:13px;line-height:13px;color:#dbdbdb;left:15.30px;">Equity</div>
<div class="t" style="top:242px;font-size:13px;line-height:13px;color:#dbdbdb;left:15.30px;">Buy &amp; hold</div>
<div class="t" style="top:267px;font-size:13px;line-height:13px;color:#555555;left:15.30px;">Trades excursions</div>
<div class="t" style="top:292px;font-size:13px;line-height:13px;color:#dbdbdb;left:15.30px;">Run-up / Drawdowns</div>
<div class="t" style="top:573px;font-size:18px;line-height:18px;color:#dbdbdb;font-weight:700;left:59.00px;">Performance</div>
<div class="t" style="top:622px;font-size:14px;line-height:14px;color:#dbdbdb;font-weight:700;left:33.00px;">Profit structure</div>
<div class="t" style="top:622px;font-size:14px;line-height:14px;color:#dbdbdb;font-weight:700;left:924.00px;">Benchmarking</div>
<div class="t" style="top:887px;font-size:14px;line-height:14px;color:#dbdbdb;font-weight:700;left:33.00px;">Returns</div>
<div class="t" style="top:927px;font-size:14px;line-height:14px;color:#8c8c8c;left:33.00px;">Metric</div>
<div class="t" style="top:927px;font-size:14px;line-height:14px;color:#8c8c8c;right:1097.50px;">All</div>
<div class="t" style="top:927px;font-size:14px;line-height:14px;color:#8c8c8c;right:741.30px;">Long</div>
<div class="t" style="top:927px;font-size:14px;line-height:14px;color:#8c8c8c;right:385.00px;">Short</div>
<div class="t" style="top:977px;font-size:14px;line-height:14px;color:#dbdbdb;left:33.00px;">Initial capital</div>
<div class="t" style="top:975px;font-size:14px;line-height:14px;color:#dbdbdb;right:1097.50px;">100.00<span class="u2">USD</span></div>
<div class="t" style="top:1034px;font-size:14px;line-height:14px;color:#dbdbdb;left:33.00px;">Open P&amp;L</div>
<div class="t" style="top:1023px;font-size:14px;line-height:14px;color:#dbdbdb;right:1097.50px;">0<span class="u2">USD</span></div>
<div class="dot" style="left:285.6px;top:845.0px;background:#089981"></div>
<div class="t" style="top:842px;font-size:13px;line-height:13px;color:#a0a0a0;left:301.60px;">Total profit</div>
<div class="dot" style="left:378.0px;top:845.0px;background:#f23645"></div>
<div class="t" style="top:842px;font-size:13px;line-height:13px;color:#a0a0a0;left:394.00px;">Total loss</div>
<div class="dot" style="left:463.8px;top:845.0px;background:#ff9800"></div>
<div class="t" style="top:842px;font-size:13px;line-height:13px;color:#a0a0a0;left:479.80px;">Commission</div>
<div class="dot" style="left:567.0px;top:845.0px;background:#2f7cf6"></div>
<div class="t" style="top:842px;font-size:13px;line-height:13px;color:#a0a0a0;left:583.60px;">Total P&amp;L</div>
<div class="dot" style="left:1228.0px;top:845.0px;background:#ff9800"></div>
<div class="t" style="top:842px;font-size:13px;line-height:13px;color:#a0a0a0;left:1244.20px;">P&amp;L for buy &amp; hold</div>
<div class="dot" style="left:1368.0px;top:845.0px;background:#2f7cf6"></div>
<div class="t" style="top:842px;font-size:13px;line-height:13px;color:#a0a0a0;left:1384.20px;">P&amp;L for strategy</div>
<div class="t" style="top:653px;font-size:12px;line-height:12px;color:#c4c4c4;right:923.50px;">600.00</div>
<div class="t" style="top:694px;font-size:12px;line-height:12px;color:#c4c4c4;right:923.50px;">450.00</div>
<div class="t" style="top:734px;font-size:12px;line-height:12px;color:#c4c4c4;right:923.50px;">300.00</div>
<div class="t" style="top:775px;font-size:12px;line-height:12px;color:#c4c4c4;right:923.50px;">150.00</div>
<div class="t" style="top:815px;font-size:12px;line-height:12px;color:#c4c4c4;right:923.50px;">0.00</div>
<svg class="gl" width="1815" height="1041" viewBox="0 0 1815 1041">
<text x="51.9" y="521.2" text-anchor="middle" font-size="12" fill="#c4c4c4">Jun</text>
<text x="146.2" y="521.2" text-anchor="middle" font-size="12" fill="#c4c4c4">Aug</text>
<text x="230.0" y="521.2" text-anchor="middle" font-size="12" fill="#c4c4c4">3</text>
<text x="313.8" y="521.2" text-anchor="middle" font-size="12" fill="#c4c4c4" font-weight="700">2024</text>
<text x="460.5" y="521.2" text-anchor="middle" font-size="12" fill="#c4c4c4">Mar</text>
<text x="544.3" y="521.2" text-anchor="middle" font-size="12" fill="#c4c4c4">Apr</text>
<text x="628.1" y="521.2" text-anchor="middle" font-size="12" fill="#c4c4c4">Jun</text>
<text x="743.3" y="521.2" text-anchor="middle" font-size="12" fill="#c4c4c4">Aug</text>
<text x="858.5" y="521.2" text-anchor="middle" font-size="12" fill="#c4c4c4">Oct</text>
<text x="984.3" y="521.2" text-anchor="middle" font-size="12" fill="#c4c4c4" font-weight="700">2025</text>
<text x="1120.4" y="521.2" text-anchor="middle" font-size="12" fill="#c4c4c4">Mar</text>
<text x="1225.2" y="521.2" text-anchor="middle" font-size="12" fill="#c4c4c4">May</text>
<text x="1319.5" y="521.2" text-anchor="middle" font-size="12" fill="#c4c4c4">Aug</text>
<text x="1466.1" y="521.2" text-anchor="middle" font-size="12" fill="#c4c4c4">Oct</text>
<text x="1550.0" y="521.2" text-anchor="middle" font-size="12" fill="#c4c4c4">7</text>
<text x="1633.8" y="521.2" text-anchor="middle" font-size="12" fill="#c4c4c4" font-weight="700">2026</text>
<text x="1717.6" y="521.2" text-anchor="middle" font-size="12" fill="#c4c4c4">Mar</text>
<text x="1744.4" y="225.8" font-size="12" letter-spacing="-0.12" fill="#b8b8b8">350.00%</text>
<text x="1744.4" y="259.8" font-size="12" letter-spacing="-0.12" fill="#b8b8b8">300.00%</text>
<text x="1744.4" y="294.8" font-size="12" letter-spacing="-0.12" fill="#b8b8b8">250.00%</text>
<text x="1744.4" y="329.8" font-size="12" letter-spacing="-0.12" fill="#b8b8b8">200.00%</text>
<text x="1744.4" y="364.8" font-size="12" letter-spacing="-0.12" fill="#b8b8b8">150.00%</text>
<text x="1744.4" y="399.8" font-size="12" letter-spacing="-0.12" fill="#b8b8b8">100.00%</text>
<text x="1744.4" y="434.8" font-size="12" letter-spacing="-0.12" fill="#b8b8b8">50.00%</text>
<text x="1744.4" y="468.8" font-size="12" letter-spacing="-0.12" fill="#b8b8b8">0.00%</text>
<text x="1719.4" y="664.1" font-size="11" letter-spacing="0.1" fill="#c4c4c4">470.00%</text>
<text x="1719.4" y="735.1" font-size="11" letter-spacing="0.1" fill="#c4c4c4">200.00%</text>
<text x="1719.4" y="788.1" font-size="11" letter-spacing="0.1" fill="#c4c4c4">0.00%</text>
<text x="1719.4" y="825.1" font-size="11" letter-spacing="0.1" fill="#c4c4c4">−140.00%</text>
<text x="1136.3" y="695.4" font-size="13" fill="#fff">Max</text>
<text x="1243.4" y="695.4" text-anchor="end" font-size="13" fill="#fff">350.05%</text>
<text x="1136.3" y="741.4" font-size="13" fill="#fff">Current</text>
<text x="1243.4" y="741.4" text-anchor="end" font-size="13" fill="#fff">176.61%</text>
<text x="1136.3" y="789.6" font-size="13" fill="#fff">Min</text>
<text x="1243.4" y="789.6" text-anchor="end" font-size="13" fill="#fff">−7.62%</text>
<text x="1389.3" y="739.4" font-size="13" fill="#fff">Max</text>
<text x="1496.4" y="739.4" text-anchor="end" font-size="13" fill="#fff">115.64%</text>
<text x="1389.3" y="757.3" font-size="13" fill="#fff">Current</text>
<text x="1496.4" y="757.3" text-anchor="end" font-size="13" fill="#fff">115.64%</text>
<text x="1389.3" y="792.5" font-size="13" fill="#fff">Min</text>
<text x="1496.4" y="792.5" text-anchor="end" font-size="13" fill="#fff">−18.81%</text>
<rect x="1741.3" y="333.1" width="60.5" height="17.1" rx="2.5" fill="#5b9cf6"/><text x="1750.6" y="345.4" font-size="12" letter-spacing="-0.1" fill="#fff">176.61%</text>
<rect x="1741.3" y="376" width="59.8" height="16.8" rx="2.5" fill="#089981"/><text x="1750.6" y="387.9" font-size="12" letter-spacing="-0.1" fill="#fff">115.64%</text>
</svg>
</body></html>
